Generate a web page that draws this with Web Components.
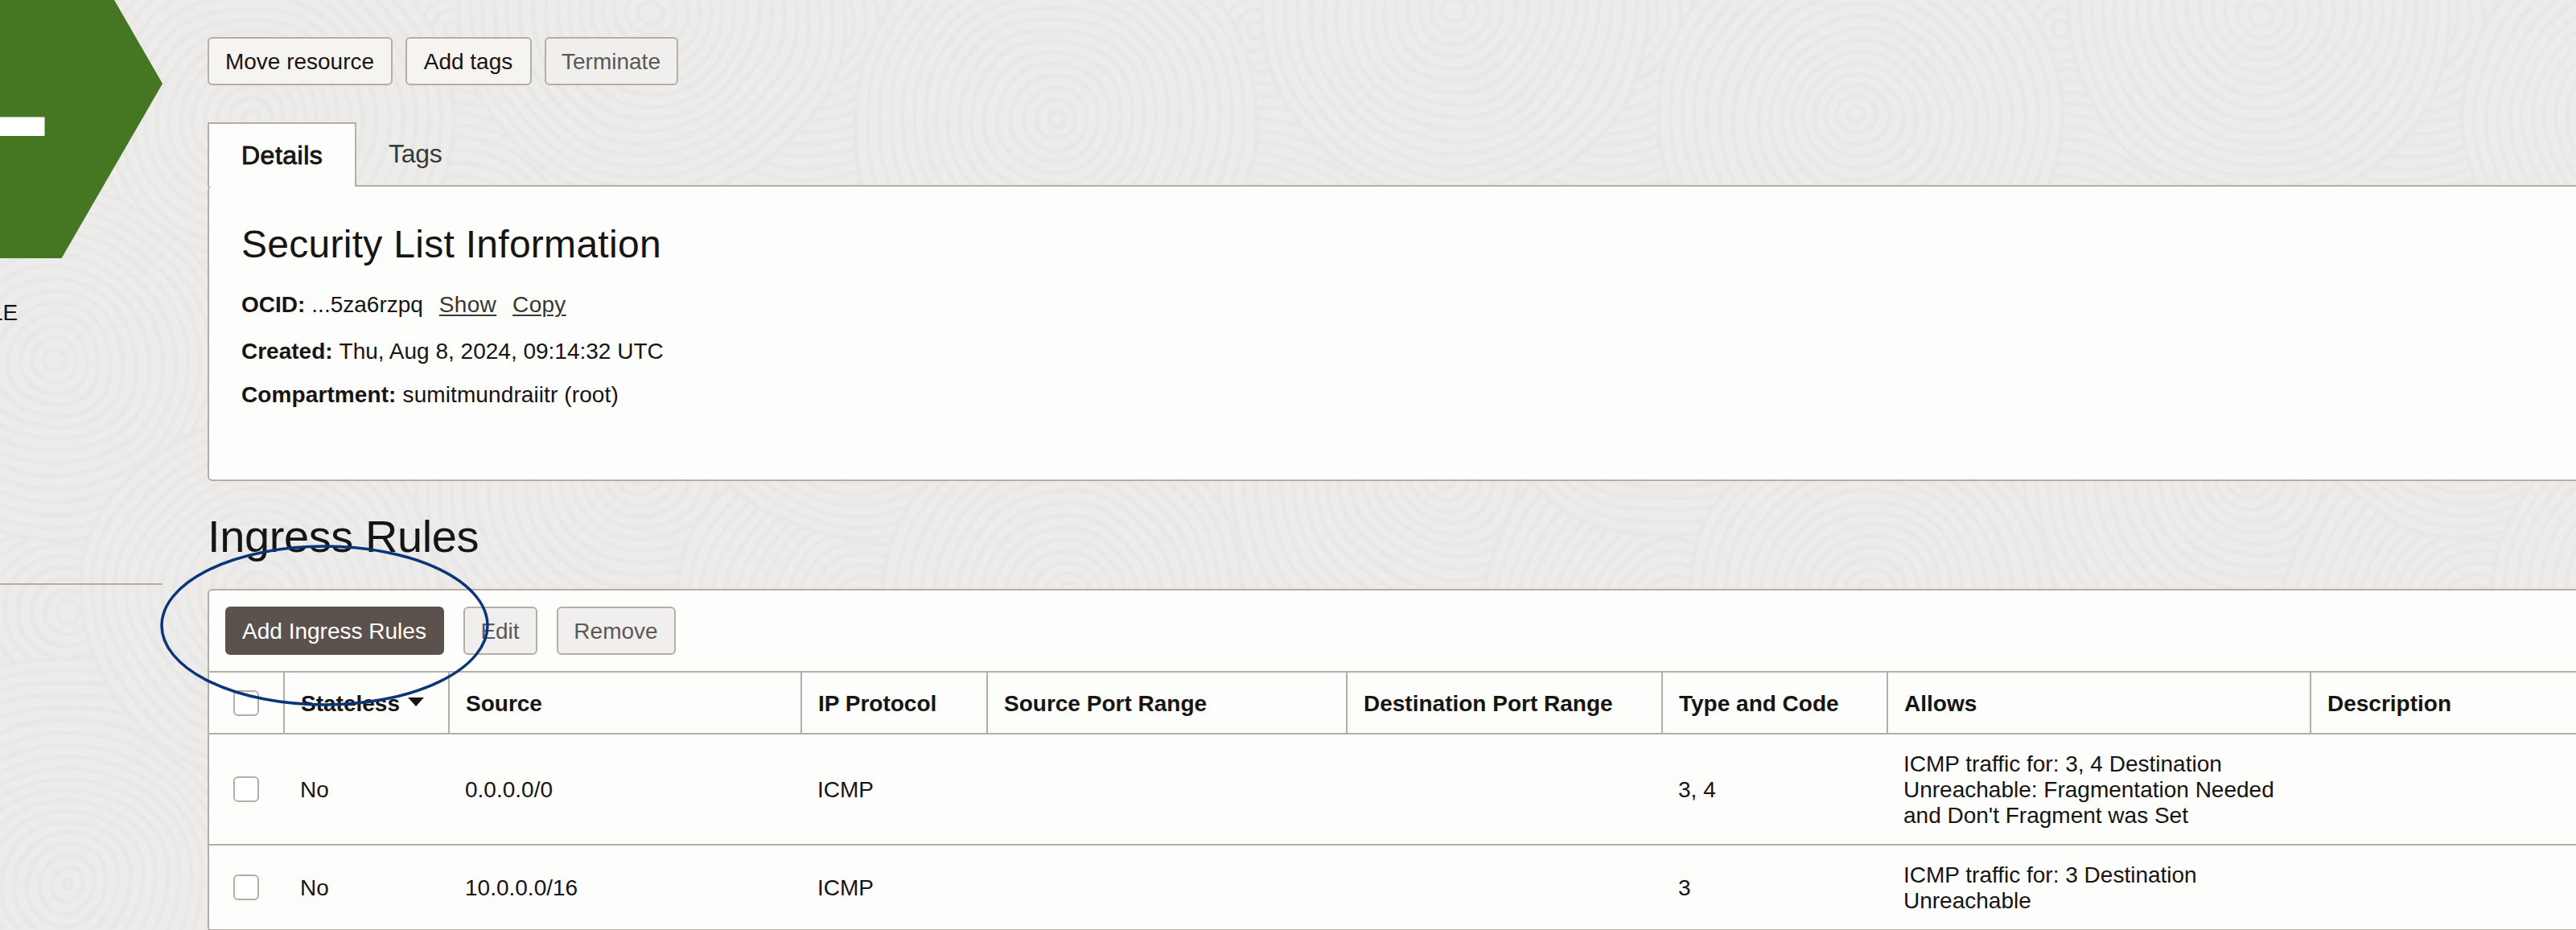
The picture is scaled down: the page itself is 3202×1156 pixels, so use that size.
<!DOCTYPE html>
<html lang="en">
<head>
<meta charset="utf-8">
<title>Security List</title>
<style>
  html, body { margin: 0; height: 100%; overflow: hidden; }
  body { background: #edecea; font-family: "Liberation Sans", Arial, sans-serif; font-size: 28px; line-height: 32px; color: #161513; }
</style>
</head>
<body>
<oci-page>
  <oci-resource-aside slot="aside">LE</oci-resource-aside>
  <oci-actions>
    <oci-button style="width:230px">Move resource</oci-button>
    <oci-button style="width:157px">Add tags</oci-button>
    <oci-button variant="disabled" style="width:166px">Terminate</oci-button>
  </oci-actions>
  <oci-tabs>
    <oci-tab active>Details</oci-tab>
    <oci-tab>Tags</oci-tab>
  </oci-tabs>
  <oci-info-panel heading="Security List Information">
    <oci-field label="OCID:">...5za6rzpq<oci-link>Show</oci-link><oci-link>Copy</oci-link></oci-field>
    <oci-field label="Created:" style="margin-top:26px">Thu, Aug 8, 2024, 09:14:32 UTC</oci-field>
    <oci-field label="Compartment:" style="margin-top:22px;letter-spacing:.1px">sumitmundraiitr (root)</oci-field>
  </oci-info-panel>
  <oci-heading>Ingress Rules</oci-heading>
  <oci-rules-panel>
    <oci-button slot="tools" variant="primary" style="width:272px">Add Ingress Rules</oci-button>
    <oci-button slot="tools" variant="disabled" style="width:92px">Edit</oci-button>
    <oci-button slot="tools" variant="disabled" style="width:148px">Remove</oci-button>
    <oci-row head>
      <oci-cell><oci-checkbox></oci-checkbox></oci-cell>
      <oci-cell sorted>Stateless</oci-cell>
      <oci-cell>Source</oci-cell>
      <oci-cell>IP Protocol</oci-cell>
      <oci-cell>Source Port Range</oci-cell>
      <oci-cell>Destination Port Range</oci-cell>
      <oci-cell>Type and Code</oci-cell>
      <oci-cell>Allows</oci-cell>
      <oci-cell>Description</oci-cell>
    </oci-row>
    <oci-row style="height:138px">
      <oci-cell><oci-checkbox></oci-checkbox></oci-cell>
      <oci-cell>No</oci-cell>
      <oci-cell>0.0.0.0/0</oci-cell>
      <oci-cell>ICMP</oci-cell>
      <oci-cell></oci-cell>
      <oci-cell></oci-cell>
      <oci-cell>3, 4</oci-cell>
      <oci-cell>ICMP traffic for: 3, 4 Destination Unreachable: Fragmentation Needed and Don't Fragment was Set</oci-cell>
      <oci-cell></oci-cell>
    </oci-row>
    <oci-row style="height:106px">
      <oci-cell><oci-checkbox></oci-checkbox></oci-cell>
      <oci-cell>No</oci-cell>
      <oci-cell>10.0.0.0/16</oci-cell>
      <oci-cell>ICMP</oci-cell>
      <oci-cell></oci-cell>
      <oci-cell></oci-cell>
      <oci-cell>3</oci-cell>
      <oci-cell>ICMP traffic for: 3 Destination Unreachable</oci-cell>
      <oci-cell></oci-cell>
    </oci-row>
  </oci-rules-panel>
  <oci-callout slot="overlay"></oci-callout>
</oci-page>

<script>
const define = (name, html, setup) => customElements.define(name, class extends HTMLElement {
  connectedCallback() {
    if (this.shadowRoot) return;
    this.attachShadow({ mode: 'open' }).innerHTML = html;
    if (setup) setup(this, this.shadowRoot);
  }
});

// Faint combed-ring texture, repeated every 1000px.
define('oci-texture', `
  <style>:host{display:block;position:absolute;inset:0;overflow:hidden}svg{display:block}</style>
  <svg width="3202" height="1156">
    <filter id="w" x="0" y="0" width="3202" height="1156" filterUnits="userSpaceOnUse" color-interpolation-filters="sRGB">
      <feTurbulence type="fractalNoise" baseFrequency=".008" numOctaves="1" seed="4" result="n"/>
      <feDisplacementMap in="SourceGraphic" in2="n" scale="24" xChannelSelector="R" yChannelSelector="G"/>
      <feGaussianBlur stdDeviation="1.3"/>
    </filter>
    <g fill="#edecea" stroke="#e8e7e5" stroke-width="5" filter="url(#w)"></g></svg>`,
  (el, root) => {
    const discs = [[560,40,280],[60,180,300],[1000,20,240],[560,340,260],[290,620,260],[800,590,300],
      [1080,760,240],[480,1000,280],[80,1100,290],[809,15,240],[311,147,250],[67,450,225],[324,740,225]];
    let out = '';
    for (const [x, y, r] of discs)
      for (let k = -1; k < 4; k++)
        for (let q = r; q > 4; q -= 15)
          out += `<ellipse cx="${x + k * 1000}" cy="${y}" rx="${q}" ry="${q * .97}"/>`;
    root.querySelector('g').innerHTML = out;
  });

define('oci-page', `
  <style>
    :host{display:block;position:relative;width:3202px;height:1156px;overflow:hidden}
    .layout{position:relative;display:flex;gap:56px;height:100%}
    main{flex:none;width:3040px;display:flex;flex-direction:column;padding-top:46px;box-sizing:border-box}
  </style>
  <oci-texture></oci-texture>
  <div class="layout"><slot name="aside"></slot><main><slot></slot></main></div>
  <slot name="overlay"></slot>`);

define('oci-resource-aside', `
  <style>
    :host{display:block;flex:none;width:202px}
    svg{display:block}
    .state{margin:52px 0 0 -12px;height:32px;white-space:nowrap}
    hr{margin:320px 0 0;border:0;height:2px;background:#b6aea6}
  </style>
  <svg width="202" height="321"><path d="M0 0H142L202 104L76.500 321H0Z" fill="#457621"/><rect y="145.500" width="55.500" height="23.500" fill="#fff"/></svg>
  <div class="state"><slot></slot></div><hr>`);

define('oci-actions', `<style>:host{display:flex;flex:none;gap:16px;height:60px}</style><slot></slot>`);

define('oci-button', `
  <style>
    :host{display:flex;flex:none;align-items:center;justify-content:center;box-sizing:border-box;height:60px;padding:1px 1px 0 0;
      border:2px solid #b6aea6;border-radius:6px;background:#f6f4f1;white-space:nowrap}
    :host([variant=disabled]){background:#f1efed;color:#5e5753}
    :host([variant=primary]){background:#5b524e;border-color:#5b524e;color:#fff}
  </style><slot></slot>`);

define('oci-tabs', `<style>:host{display:flex;flex:none;position:relative;z-index:1;height:80px;margin:46px 0 -2px}</style><slot></slot>`);
define('oci-tab', `
  <style>
    :host{display:flex;align-items:center;box-sizing:border-box;height:78px;padding:0 40px;font-size:32px;line-height:36px;color:#3a3835;letter-spacing:-.3px}
    :host([active]){width:185px;height:80px;padding:0 0 0 40px;border:2px solid #b6aea6;border-bottom:0;background:#fdfdfb;
      color:#161513;-webkit-text-stroke:.9px #161513;letter-spacing:.5px}
  </style><slot></slot>`);

define('oci-info-panel', `
  <style>
    :host{display:block;flex:none;box-sizing:border-box;height:368px;padding:44px 40px 0;border:2px solid #b6aea6;border-radius:6px;background:#fdfdfb}
    h2{margin:0 0 31px;font-size:48px;line-height:56px;font-weight:400;letter-spacing:.28px}
  </style><h2></h2><slot></slot>`,
  (el, root) => root.querySelector('h2').textContent = el.getAttribute('heading'));

define('oci-field', `
  <style>:host{display:flex;height:32px;white-space:nowrap}b{margin-right:8px}</style><b></b><slot></slot>`,
  (el, root) => root.querySelector('b').textContent = el.getAttribute('label'));

define('oci-link', `
  <style>:host{display:block;margin-left:20px;letter-spacing:.3px;color:#3a3632;text-decoration:underline;text-decoration-thickness:2px;text-underline-offset:3px}</style><slot></slot>`);

define('oci-heading', `<style>:host{display:block;flex:none;margin:37px 0 33px;height:64px;font-size:56px;line-height:64px;letter-spacing:-.4px}</style><slot></slot>`);

define('oci-rules-panel', `
  <style>
    :host{display:flex;flex-direction:column;flex:none;border:2px solid #b6aea6;border-radius:6px;background:#fdfdfb}
    .tools{display:flex;gap:24px;padding:20px}
  </style><div class="tools"><slot name="tools"></slot></div><slot></slot>`);

define('oci-row', `
  <style>
    :host{display:grid;flex:none;box-sizing:border-box;grid-template-columns:94px 205px 438px 231px 447px 392px 280px 526px 1fr;border-bottom:2px solid #b6aea6}
    :host([head]){height:79px;border-top:2px solid #b6aea6;font-weight:700}
  </style><slot></slot>`);

define('oci-cell', `
  <style>
    :host{display:flex;align-items:center;box-sizing:border-box;padding:2px 21px 0 19px;border-right:2px solid transparent}
    :host(.head){border-color:#b6aea6;padding:3px 20px 0;white-space:nowrap}
    :host(.check){padding:0 30px}
    svg{display:none;margin:-5px 0 0 10px}
    :host([sorted]) svg{display:block}
  </style><span><slot></slot></span><svg width="20" height="11"><path d="M0 0H20L10 11Z" fill="#161513"/></svg>`,
  (el) => {
    if (el.querySelector('oci-checkbox')) el.classList.add('check');
    if (el.parentElement.hasAttribute('head')) el.classList.add('head');
  });

define('oci-checkbox', `<style>:host{display:block;box-sizing:border-box;width:32px;height:32px;border:2px solid #b6aea6;border-radius:6px;background:#fff}</style>`);

// Hand-drawn highlight around the primary action.
define('oci-callout', `
  <style>:host{display:block;position:absolute;left:198px;top:674px;z-index:2;pointer-events:none}svg{display:block}</style>
  <svg width="412" height="208"><ellipse cx="205.500" cy="103.500" rx="202.500" ry="98.500" fill="none" stroke="#0b3579" stroke-width="3.500"/></svg>`);
</script>
</body>
</html>
